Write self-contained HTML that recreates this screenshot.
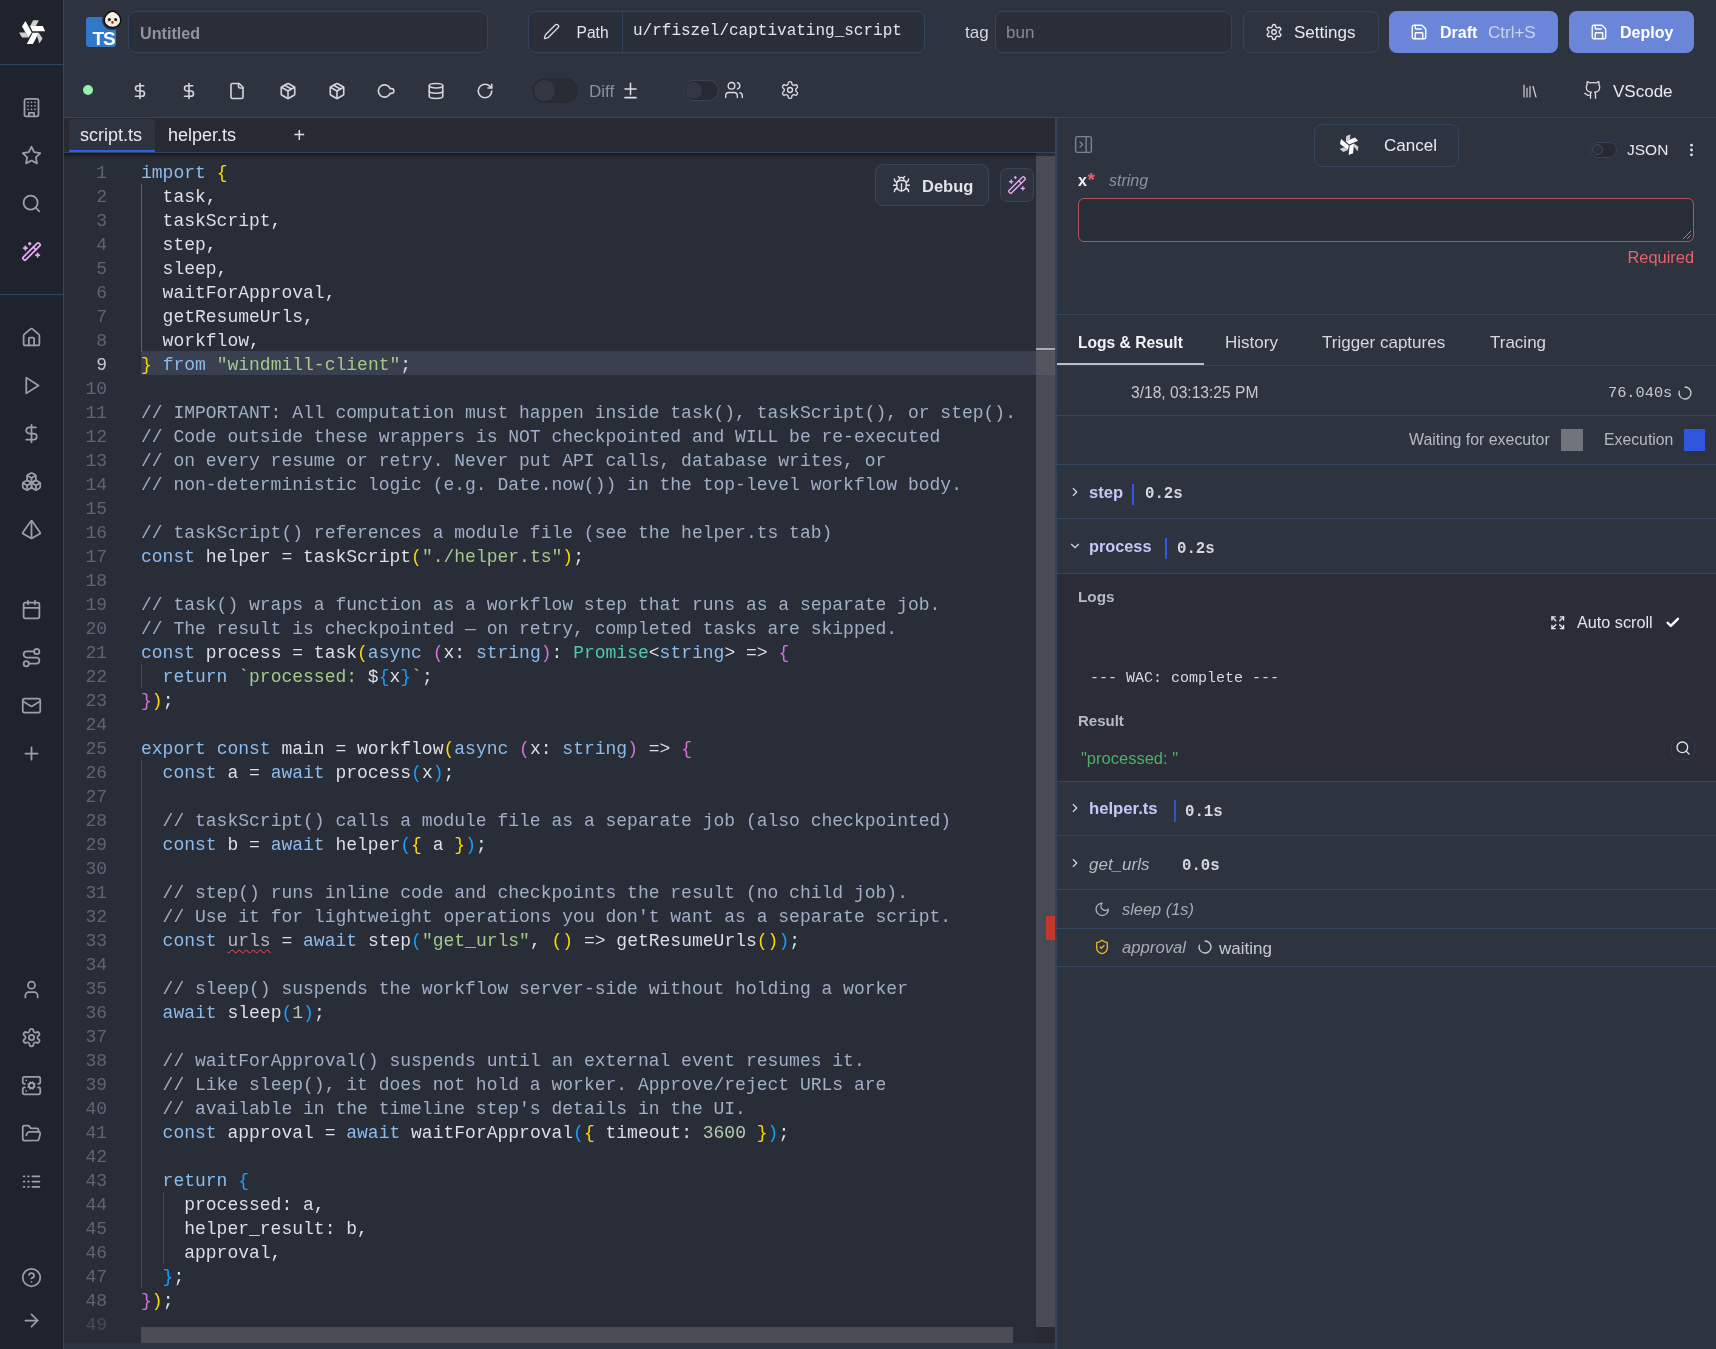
<!DOCTYPE html>
<html><head><meta charset="utf-8"><style>
*{box-sizing:border-box;margin:0;padding:0}
html,body{will-change:transform;width:1716px;height:1349px;overflow:hidden;background:#2e3340;font-family:"Liberation Sans",sans-serif;color:#e2e5ea}
.abs,.ic{position:absolute}
.ic{display:block}
#sidebar{position:absolute;left:0;top:0;width:64px;height:1349px;background:#1f232d;border-right:1px solid #35435a}
.hline{position:absolute;height:1px;background:#35455b}
.vline{position:absolute;width:1px;background:#35455b}
.input{position:absolute;border:1px solid #36445a;border-radius:8px;background:#2a2e39}
.btn{position:absolute;border:1px solid #36445a;border-radius:8px;background:#2e3340}
.t{position:absolute;white-space:pre;line-height:1}
.mono{font-family:"Liberation Mono",monospace}
#editor{position:absolute;left:64px;top:153px;width:991px;height:1190px;background:#292d38;overflow:hidden}
.ln{position:absolute;left:64px;width:43px;text-align:right;font-family:"Liberation Mono",monospace;font-size:18px;line-height:24px;color:#5d6576;height:24px}
.ln.cur{color:#c5c8ce}
.cl{position:absolute;left:141px;font-family:"Liberation Mono",monospace;font-size:18px;line-height:24px;color:#dcdfe4;white-space:pre;height:24px}
.k{color:#8cbcec} .c{color:#a0aec6} .s{color:#a6c98a} .t{} .tp{color:#4ec9b0} .n{color:#b5cea8}
.b1{color:#ffd700} .b2{color:#da70d6} .b3{color:#179fff}
.u{color:#b4b7bd;text-decoration:underline wavy #f14c4c;text-underline-offset:3px;text-decoration-thickness:1px}
#rightx{position:absolute;left:1056px;top:117px;width:660px;height:1232px;background:#2e3340;border-left:1px solid #3a4252}
.row{position:absolute;left:0;width:660px;border-bottom:1px solid #3a4252}
</style></head><body>
<div id="sidebar">
  <svg class="ic" style="left:14px;top:14px;width:36px;height:36px;transform:rotate(0deg);transform-origin:50% 51%" viewBox="0 0 1349 1349"><polygon fill="#ffffff" points="300,470 430,265 665,690 545,885"/><polygon fill="#d0d0d0" points="190,690 430,690 545,885 300,885"/><polygon fill="#ffffff" points="600,450 1080,450 1165,650 690,650"/><polygon fill="#d0d0d0" points="605,450 720,230 930,230 820,450"/><polygon fill="#ffffff" points="480,1120 700,705 930,705 710,1120"/><polygon fill="#d0d0d0" points="860,800 930,705 1070,920 950,1110"/></svg>
  <div class="hline" style="left:0;top:64px;width:63px"></div>
  <div class="hline" style="left:0;top:294px;width:63px"></div>
  <svg class="ic" style="left:21px;top:97px;width:21px;height:21px;" viewBox="0 0 24 24" fill="none" stroke="#9aa0ab" stroke-width="2" stroke-linecap="round" stroke-linejoin="round"><rect width="16" height="20" x="4" y="2" rx="2" ry="2"/><path d="M9 22v-4h6v4"/><path d="M8 6h.01M16 6h.01M12 6h.01M12 10h.01M12 14h.01M16 10h.01M16 14h.01M8 10h.01M8 14h.01"/></svg>
<svg class="ic" style="left:21px;top:145px;width:21px;height:21px;" viewBox="0 0 24 24" fill="none" stroke="#9aa0ab" stroke-width="2" stroke-linecap="round" stroke-linejoin="round"><polygon points="12 2 15.09 8.26 22 9.27 17 14.14 18.18 21.02 12 17.77 5.82 21.02 7 14.14 2 9.27 8.91 8.26 12 2"/></svg>
<svg class="ic" style="left:21px;top:193px;width:21px;height:21px;" viewBox="0 0 24 24" fill="none" stroke="#9aa0ab" stroke-width="2" stroke-linecap="round" stroke-linejoin="round"><circle cx="11" cy="11" r="8"/><path d="m21 21-4.3-4.3"/></svg>
<svg class="ic" style="left:21px;top:241px;width:21px;height:21px;" viewBox="0 0 24 24" fill="none" stroke="#e9a8f5" stroke-width="2" stroke-linecap="round" stroke-linejoin="round"><path d="m21.64 3.64-1.28-1.28a1.21 1.21 0 0 0-1.72 0L2.36 18.64a1.21 1.21 0 0 0 0 1.72l1.28 1.28a1.2 1.2 0 0 0 1.72 0L21.64 5.36a1.2 1.2 0 0 0 0-1.72"/><path d="m14 7 3 3"/><path d="M5 6v4"/><path d="M19 14v4"/><path d="M10 2v2"/><path d="M7 8H3"/><path d="M21 16h-4"/><path d="M11 3H9"/></svg>
<svg class="ic" style="left:21px;top:327px;width:21px;height:21px;" viewBox="0 0 24 24" fill="none" stroke="#9aa0ab" stroke-width="2" stroke-linecap="round" stroke-linejoin="round"><path d="M15 21v-8a1 1 0 0 0-1-1h-4a1 1 0 0 0-1 1v8"/><path d="M3 10a2 2 0 0 1 .709-1.528l7-5.999a2 2 0 0 1 2.582 0l7 5.999A2 2 0 0 1 21 10v9a2 2 0 0 1-2 2H5a2 2 0 0 1-2-2z"/></svg>
<svg class="ic" style="left:21px;top:375px;width:21px;height:21px;" viewBox="0 0 24 24" fill="none" stroke="#9aa0ab" stroke-width="2" stroke-linecap="round" stroke-linejoin="round"><polygon points="6 3 20 12 6 21 6 3"/></svg>
<svg class="ic" style="left:21px;top:423px;width:21px;height:21px;" viewBox="0 0 24 24" fill="none" stroke="#9aa0ab" stroke-width="2" stroke-linecap="round" stroke-linejoin="round"><line x1="12" x2="12" y1="2" y2="22"/><path d="M17 5H9.5a3.5 3.5 0 0 0 0 7h5a3.5 3.5 0 0 1 0 7H6"/></svg>
<svg class="ic" style="left:21px;top:471px;width:21px;height:21px;" viewBox="0 0 24 24" fill="none" stroke="#9aa0ab" stroke-width="2" stroke-linecap="round" stroke-linejoin="round"><path d="M2.97 12.92A2 2 0 0 0 2 14.63v3.24a2 2 0 0 0 .97 1.71l3 1.8a2 2 0 0 0 2.06 0L12 19v-5.5l-5-3-4.03 2.42Z"/><path d="m7 16.5-4.74-2.85"/><path d="m7 16.5 5-3"/><path d="M7 16.5v5.17"/><path d="M12 13.5V19l3.97 2.38a2 2 0 0 0 2.06 0l3-1.8a2 2 0 0 0 .97-1.710v-3.24a2 2 0 0 0-.97-1.71L17 10.5l-5 3Z"/><path d="m17 16.5-5-3"/><path d="m17 16.5 4.74-2.85"/><path d="M17 16.5v5.17"/><path d="M7.97 4.42A2 2 0 0 0 7 6.13v4.37l5 3 5-3V6.13a2 2 0 0 0-.97-1.71l-3-1.8a2 2 0 0 0-2.06 0l-3 1.8Z"/><path d="M12 8 7.26 5.15"/><path d="m12 8 4.74-2.85"/><path d="M12 13.5V8"/></svg>
<svg class="ic" style="left:21px;top:519px;width:21px;height:21px;" viewBox="0 0 24 24" fill="none" stroke="#9aa0ab" stroke-width="2" stroke-linecap="round" stroke-linejoin="round"><path d="M2.5 16.88a1 1 0 0 1-.32-1.43l9-13.02a1 1 0 0 1 1.64 0l9 13.01a1 1 0 0 1-.32 1.44l-8.51 4.86a2 2 0 0 1-1.98 0Z"/><path d="M12 2v20"/></svg>
<svg class="ic" style="left:21px;top:599px;width:21px;height:21px;" viewBox="0 0 24 24" fill="none" stroke="#9aa0ab" stroke-width="2" stroke-linecap="round" stroke-linejoin="round"><path d="M8 2v4"/><path d="M16 2v4"/><rect width="18" height="18" x="3" y="4" rx="2"/><path d="M3 10h18"/></svg>
<svg class="ic" style="left:21px;top:647px;width:21px;height:21px;" viewBox="0 0 24 24" fill="none" stroke="#9aa0ab" stroke-width="2" stroke-linecap="round" stroke-linejoin="round"><circle cx="6" cy="19" r="3"/><path d="M9 19h8.5a3.5 3.5 0 0 0 0-7h-11a3.5 3.5 0 0 1 0-7H15"/><circle cx="18" cy="5" r="3"/></svg>
<svg class="ic" style="left:21px;top:695px;width:21px;height:21px;" viewBox="0 0 24 24" fill="none" stroke="#9aa0ab" stroke-width="2" stroke-linecap="round" stroke-linejoin="round"><rect width="20" height="16" x="2" y="4" rx="2"/><path d="m22 7-8.97 5.7a1.94 1.94 0 0 1-2.06 0L2 7"/></svg>
<svg class="ic" style="left:21px;top:743px;width:21px;height:21px;" viewBox="0 0 24 24" fill="none" stroke="#9aa0ab" stroke-width="2" stroke-linecap="round" stroke-linejoin="round"><path d="M5 12h14"/><path d="M12 5v14"/></svg>
<svg class="ic" style="left:21px;top:979px;width:21px;height:21px;" viewBox="0 0 24 24" fill="none" stroke="#9aa0ab" stroke-width="2" stroke-linecap="round" stroke-linejoin="round"><path d="M19 21v-2a4 4 0 0 0-4-4H9a4 4 0 0 0-4 4v2"/><circle cx="12" cy="7" r="4"/></svg>
<svg class="ic" style="left:21px;top:1027px;width:21px;height:21px;" viewBox="0 0 24 24" fill="none" stroke="#9aa0ab" stroke-width="2" stroke-linecap="round" stroke-linejoin="round"><path d="M12.22 2h-.44a2 2 0 0 0-2 2v.18a2 2 0 0 1-1 1.73l-.43.25a2 2 0 0 1-2 0l-.15-.08a2 2 0 0 0-2.73.73l-.22.38a2 2 0 0 0 .73 2.73l.15.1a2 2 0 0 1 1 1.72v.51a2 2 0 0 1-1 1.74l-.15.09a2 2 0 0 0-.73 2.73l.22.38a2 2 0 0 0 2.73.73l.15-.08a2 2 0 0 1 2 0l.43.25a2 2 0 0 1 1 1.73V20a2 2 0 0 0 2 2h.44a2 2 0 0 0 2-2v-.18a2 2 0 0 1 1-1.73l.43-.25a2 2 0 0 1 2 0l.15.08a2 2 0 0 0 2.73-.73l.22-.39a2 2 0 0 0-.73-2.73l-.15-.08a2 2 0 0 1-1-1.74v-.5a2 2 0 0 1 1-1.74l.15-.09a2 2 0 0 0 .73-2.73l-.22-.38a2 2 0 0 0-2.73-.73l-.15.08a2 2 0 0 1-2 0l-.43-.25a2 2 0 0 1-1-1.73V4a2 2 0 0 0-2-2z"/><circle cx="12" cy="12" r="3"/></svg>
<svg class="ic" style="left:21px;top:1075px;width:21px;height:21px;" viewBox="0 0 24 24" fill="none" stroke="#9aa0ab" stroke-width="2" stroke-linecap="round" stroke-linejoin="round"><circle cx="12" cy="12" r="3"/><path d="M4.5 10H4a2 2 0 0 1-2-2V4a2 2 0 0 1 2-2h16a2 2 0 0 1 2 2v4a2 2 0 0 1-2 2h-.5"/><path d="M4.5 14H4a2 2 0 0 0-2 2v4a2 2 0 0 0 2 2h16a2 2 0 0 0 2-2v-4a2 2 0 0 0-2-2h-.5"/><path d="M6 6h.01"/><path d="M6 18h.01"/><path d="m15.7 13.4-.9-.3"/><path d="m9.2 10.9-.9-.3"/><path d="m10.6 15.7.3-.9"/><path d="m13.6 15.7-.4-1"/><path d="m10.8 9.3-.4-1"/><path d="m8.3 13.6 1-.4"/><path d="m14.7 10.4 1-.4"/><path d="m13.4 8.3-.3.9"/></svg>
<svg class="ic" style="left:21px;top:1123px;width:21px;height:21px;" viewBox="0 0 24 24" fill="none" stroke="#9aa0ab" stroke-width="2" stroke-linecap="round" stroke-linejoin="round"><path d="m6 14 1.5-2.9A2 2 0 0 1 9.24 10H20a2 2 0 0 1 1.94 2.5l-1.54 6a2 2 0 0 1-1.95 1.5H4a2 2 0 0 1-2-2V5a2 2 0 0 1 2-2h3.9a2 2 0 0 1 1.69.9l.81 1.2a2 2 0 0 0 1.67.9H18a2 2 0 0 1 2 2v2"/></svg>
<svg class="ic" style="left:21px;top:1171px;width:21px;height:21px;" viewBox="0 0 24 24" fill="none" stroke="#9aa0ab" stroke-width="2" stroke-linecap="round" stroke-linejoin="round"><path d="M13 12h8"/><path d="M13 18h8"/><path d="M13 6h8"/><path d="M3 12h1"/><path d="M3 18h1"/><path d="M3 6h1"/><path d="M8 12h1"/><path d="M8 18h1"/><path d="M8 6h1"/></svg>
<svg class="ic" style="left:21px;top:1267px;width:21px;height:21px;" viewBox="0 0 24 24" fill="none" stroke="#9aa0ab" stroke-width="2" stroke-linecap="round" stroke-linejoin="round"><circle cx="12" cy="12" r="10"/><path d="M9.09 9a3 3 0 0 1 5.83 1c0 2-3 3-3 3"/><path d="M12 17h.01"/></svg>
<svg class="ic" style="left:21px;top:1310px;width:21px;height:21px;" viewBox="0 0 24 24" fill="none" stroke="#9aa0ab" stroke-width="2" stroke-linecap="round" stroke-linejoin="round"><path d="M5 12h14"/><path d="m12 5 7 7-7 7"/></svg>
</div>

<!-- header row 1 -->
<div class="abs" style="left:86px;top:17px;width:30px;height:30px;background:#3178c6;border-radius:3px"></div>
<div class="t" style="left:92.5px;top:28.5px;font-size:19px;font-weight:bold;color:#fff;letter-spacing:-1.2px">TS</div>
<svg class="ic" style="left:100px;top:8px;width:26px;height:24px" viewBox="0 0 26 24">
<path d="M12.5 3C15 3.3 19.5 6 20.6 10.5C21.5 15 18.2 19.5 12.5 19.5C6.8 19.5 3.5 15 4.4 10.5C5.5 6 10 3.3 12.5 3Z" fill="#2e3340" stroke="#2e3340" stroke-width="4.5"/>
<path d="M12.5 3C15 3.3 19.5 6 20.6 10.5C21.5 15 18.2 19.5 12.5 19.5C6.8 19.5 3.5 15 4.4 10.5C5.5 6 10 3.3 12.5 3Z" fill="#f7efdf" stroke="#0d0d0d" stroke-width="1.4"/>
<ellipse cx="8.2" cy="13.4" rx="1.3" ry="0.8" fill="#f3b9cc"/><ellipse cx="16.8" cy="13.4" rx="1.3" ry="0.8" fill="#f3b9cc"/>
<circle cx="9.4" cy="11.4" r="1.5" fill="#1b1b1b"/><circle cx="15.6" cy="11.4" r="1.5" fill="#1b1b1b"/>
<circle cx="12.5" cy="14.4" r="1.3" fill="#b8232b"/>
</svg>
<div class="input" style="left:128px;top:11px;width:360px;height:42px"></div>
<div class="t" style="left:140px;top:24.5px;font-size:16.2px;font-weight:bold;color:#8f95a0">Untitled</div>

<div class="input" style="left:528px;top:11px;width:397px;height:42px;background:#2a2e39"></div>
<div class="vline" style="left:622px;top:12px;height:40px;background:#36445a"></div>
<svg class="ic" style="left:543px;top:23px;width:17px;height:17px;" viewBox="0 0 24 24" fill="none" stroke="#d9dde3" stroke-width="1.8" stroke-linecap="round" stroke-linejoin="round"><path d="M21.174 6.812a1 1 0 0 0-3.986-3.987L3.842 16.174a2 2 0 0 0-.5.83l-1.321 4.352a.5.5 0 0 0 .623.622l4.353-1.32a2 2 0 0 0 .83-.497z"/></svg>
<div class="t" style="left:576.5px;top:25px;font-size:15.6px;color:#e2e5ea">Path</div>
<div class="t mono" style="left:633px;top:23px;font-size:16px;color:#e2e5ea">u/rfiszel/captivating_script</div>

<div class="t" style="left:965px;top:24px;font-size:17px;color:#d5d8de">tag</div>
<div class="input" style="left:995px;top:11px;width:237px;height:42px"></div>
<div class="t" style="left:1006px;top:24px;font-size:17px;color:#858b95">bun</div>

<div class="btn" style="left:1243px;top:11px;width:136px;height:42px"></div>
<svg class="ic" style="left:1265px;top:23px;width:18px;height:18px;" viewBox="0 0 24 24" fill="none" stroke="#e2e5ea" stroke-width="1.8" stroke-linecap="round" stroke-linejoin="round"><path d="M12.22 2h-.44a2 2 0 0 0-2 2v.18a2 2 0 0 1-1 1.73l-.43.25a2 2 0 0 1-2 0l-.15-.08a2 2 0 0 0-2.73.73l-.22.38a2 2 0 0 0 .73 2.73l.15.1a2 2 0 0 1 1 1.72v.51a2 2 0 0 1-1 1.74l-.15.09a2 2 0 0 0-.73 2.73l.22.38a2 2 0 0 0 2.73.73l.15-.08a2 2 0 0 1 2 0l.43.25a2 2 0 0 1 1 1.73V20a2 2 0 0 0 2 2h.44a2 2 0 0 0 2-2v-.18a2 2 0 0 1 1-1.73l.43-.25a2 2 0 0 1 2 0l.15.08a2 2 0 0 0 2.73-.73l.22-.39a2 2 0 0 0-.73-2.73l-.15-.08a2 2 0 0 1-1-1.74v-.5a2 2 0 0 1 1-1.74l.15-.09a2 2 0 0 0 .73-2.73l-.22-.38a2 2 0 0 0-2.73-.73l-.15.08a2 2 0 0 1-2 0l-.43-.25a2 2 0 0 1-1-1.73V4a2 2 0 0 0-2-2z"/><circle cx="12" cy="12" r="3"/></svg>
<div class="t" style="left:1294px;top:24px;font-size:17px;color:#e8eaee">Settings</div>

<div class="abs" style="left:1389px;top:11px;width:169px;height:42px;background:#6b86d9;border-radius:8px"></div>
<svg class="ic" style="left:1410px;top:23px;width:18px;height:18px;" viewBox="0 0 24 24" fill="none" stroke="#ffffff" stroke-width="1.8" stroke-linecap="round" stroke-linejoin="round"><path d="M15.2 3a2 2 0 0 1 1.4.6l3.8 3.8a2 2 0 0 1 .6 1.4V19a2 2 0 0 1-2 2H5a2 2 0 0 1-2-2V5a2 2 0 0 1 2-2z"/><path d="M17 21v-7a1 1 0 0 0-1-1H8a1 1 0 0 0-1 1v7"/><path d="M7 3v4a1 1 0 0 0 1 1h7"/></svg>
<div class="t" style="left:1440px;top:25px;font-size:16px;font-weight:bold;color:#fff">Draft</div>
<div class="t" style="left:1488px;top:24px;font-size:17px;color:#c9d3f3">Ctrl+S</div>

<div class="abs" style="left:1569px;top:11px;width:125px;height:42px;background:#6b86d9;border-radius:8px"></div>
<svg class="ic" style="left:1590px;top:23px;width:18px;height:18px;" viewBox="0 0 24 24" fill="none" stroke="#ffffff" stroke-width="1.8" stroke-linecap="round" stroke-linejoin="round"><path d="M15.2 3a2 2 0 0 1 1.4.6l3.8 3.8a2 2 0 0 1 .6 1.4V19a2 2 0 0 1-2 2H5a2 2 0 0 1-2-2V5a2 2 0 0 1 2-2z"/><path d="M17 21v-7a1 1 0 0 0-1-1H8a1 1 0 0 0-1 1v7"/><path d="M7 3v4a1 1 0 0 0 1 1h7"/></svg>
<div class="t" style="left:1620px;top:25px;font-size:16px;font-weight:bold;color:#fff">Deploy</div>

<!-- header row 2 -->
<div class="abs" style="left:83px;top:85px;width:10px;height:10px;border-radius:50%;background:#94f0b1"></div>
<svg class="ic" style="left:130.5px;top:81.5px;width:18px;height:18px;" viewBox="0 0 24 24" fill="none" stroke="#d2d5da" stroke-width="2.15" stroke-linecap="round" stroke-linejoin="round"><line x1="12" x2="12" y1="2" y2="22"/><path d="M17 5H9.5a3.5 3.5 0 0 0 0 7h5a3.5 3.5 0 0 1 0 7H6"/></svg>
<svg class="ic" style="left:179.7px;top:81.5px;width:18px;height:18px;" viewBox="0 0 24 24" fill="none" stroke="#d2d5da" stroke-width="2.15" stroke-linecap="round" stroke-linejoin="round"><line x1="12" x2="12" y1="2" y2="22"/><path d="M17 5H9.5a3.5 3.5 0 0 0 0 7h5a3.5 3.5 0 0 1 0 7H6"/></svg>
<svg class="ic" style="left:228.3px;top:81.5px;width:18px;height:18px;" viewBox="0 0 24 24" fill="none" stroke="#d2d5da" stroke-width="2.15" stroke-linecap="round" stroke-linejoin="round"><path d="M15 2H6a2 2 0 0 0-2 2v16a2 2 0 0 0 2 2h12a2 2 0 0 0 2-2V7Z"/><path d="M14 2v4a2 2 0 0 0 2 2h4"/></svg>
<svg class="ic" style="left:278.5px;top:81.5px;width:18px;height:18px;" viewBox="0 0 24 24" fill="none" stroke="#d2d5da" stroke-width="2.15" stroke-linecap="round" stroke-linejoin="round"><path d="m7.5 4.27 9 5.15"/><path d="M21 8a2 2 0 0 0-1-1.73l-7-4a2 2 0 0 0-2 0l-7 4A2 2 0 0 0 3 8v8a2 2 0 0 0 1 1.73l7 4a2 2 0 0 0 2 0l7-4A2 2 0 0 0 21 16Z"/><path d="m3.3 7 8.7 5 8.7-5"/><path d="M12 22V12"/></svg>
<svg class="ic" style="left:327.5px;top:81.5px;width:18px;height:18px;" viewBox="0 0 24 24" fill="none" stroke="#d2d5da" stroke-width="2.15" stroke-linecap="round" stroke-linejoin="round"><path d="m7.5 4.27 9 5.15"/><path d="M21 8a2 2 0 0 0-1-1.73l-7-4a2 2 0 0 0-2 0l-7 4A2 2 0 0 0 3 8v8a2 2 0 0 0 1 1.73l7 4a2 2 0 0 0 2 0l7-4A2 2 0 0 0 21 16Z"/><path d="m3.3 7 8.7 5 8.7-5"/><path d="M12 22V12"/></svg>
<svg class="ic" style="left:376.5px;top:81.5px;width:18px;height:18px;" viewBox="0 0 24 24" fill="none" stroke="#d2d5da" stroke-width="2.15" stroke-linecap="round" stroke-linejoin="round"><path d="M17.6 8.9A8.2 8.2 0 1 0 17.6 15.1L19.4 15.1A3.1 3.1 0 0 0 19.4 8.9Z"/></svg>
<svg class="ic" style="left:426.6px;top:81.5px;width:18px;height:18px;" viewBox="0 0 24 24" fill="none" stroke="#d2d5da" stroke-width="2.15" stroke-linecap="round" stroke-linejoin="round"><ellipse cx="12" cy="5" rx="9" ry="3"/><path d="M3 5V19A9 3 0 0 0 21 19V5"/><path d="M3 12A9 3 0 0 0 21 12"/></svg>
<svg class="ic" style="left:475.7px;top:81.5px;width:18px;height:18px;" viewBox="0 0 24 24" fill="none" stroke="#d2d5da" stroke-width="2.15" stroke-linecap="round" stroke-linejoin="round"><path d="M21 12a9 9 0 1 1-9-9c2.52 0 4.93 1 6.74 2.74L21 8"/><path d="M21 3v5h-5"/></svg>
<div class="abs" style="left:532px;top:78px;width:46px;height:25px;border-radius:13px;background:#282c35;border:1px solid #262a33"></div>
<div class="abs" style="left:534px;top:80px;width:21px;height:21px;border-radius:50%;background:#333844"></div>
<div class="t" style="left:589px;top:83px;font-size:17px;color:#8a909b">Diff</div>
<svg class="ic" style="left:621px;top:81px;width:19px;height:19px;" viewBox="0 0 24 24" fill="none" stroke="#d9dde3" stroke-width="2" stroke-linecap="round" stroke-linejoin="round"><path d="M12 3v14"/><path d="M5 10h14"/><path d="M5 21h14"/></svg>
<div class="abs" style="left:683px;top:80px;width:36px;height:21px;border-radius:11px;background:#262a33;border:1px solid #3b4455"></div>
<div class="abs" style="left:685px;top:82px;width:17px;height:17px;border-radius:50%;background:#323743"></div>
<svg class="ic" style="left:724px;top:80px;width:20px;height:20px;" viewBox="0 0 24 24" fill="none" stroke="#d9dde3" stroke-width="1.6" stroke-linecap="round" stroke-linejoin="round"><path d="M16 21v-2a4 4 0 0 0-4-4H6a4 4 0 0 0-4 4v2"/><circle cx="9" cy="7" r="4"/><path d="M22 21v-2a4 4 0 0 0-3-3.87"/><path d="M16 3.13a4 4 0 0 1 0 7.75"/></svg>
<svg class="ic" style="left:780px;top:80px;width:20px;height:20px;" viewBox="0 0 24 24" fill="none" stroke="#d9dde3" stroke-width="1.6" stroke-linecap="round" stroke-linejoin="round"><path d="M12.22 2h-.44a2 2 0 0 0-2 2v.18a2 2 0 0 1-1 1.73l-.43.25a2 2 0 0 1-2 0l-.15-.08a2 2 0 0 0-2.73.73l-.22.38a2 2 0 0 0 .73 2.73l.15.1a2 2 0 0 1 1 1.72v.51a2 2 0 0 1-1 1.74l-.15.09a2 2 0 0 0-.73 2.73l.22.38a2 2 0 0 0 2.73.73l.15-.08a2 2 0 0 1 2 0l.43.25a2 2 0 0 1 1 1.73V20a2 2 0 0 0 2 2h.44a2 2 0 0 0 2-2v-.18a2 2 0 0 1 1-1.73l.43-.25a2 2 0 0 1 2 0l.15.08a2 2 0 0 0 2.73-.73l.22-.39a2 2 0 0 0-.73-2.73l-.15-.08a2 2 0 0 1-1-1.74v-.5a2 2 0 0 1 1-1.74l.15-.09a2 2 0 0 0 .73-2.73l-.22-.38a2 2 0 0 0-2.73-.73l-.15.08a2 2 0 0 1-2 0l-.43-.25a2 2 0 0 1-1-1.73V4a2 2 0 0 0-2-2z"/><circle cx="12" cy="12" r="3"/></svg>
<svg class="ic" style="left:1520.5px;top:82px;width:18px;height:18px;" viewBox="0 0 24 24" fill="none" stroke="#d9dde3" stroke-width="1.5" stroke-linecap="round" stroke-linejoin="round"><path d="m16 6 4 14"/><path d="M12 6v14"/><path d="M8 8v12"/><path d="M4 4v16"/></svg>
<svg class="ic" style="left:1583px;top:80px;width:20px;height:20px;" viewBox="0 0 24 24" fill="none" stroke="#d9dde3" stroke-width="1.6" stroke-linecap="round" stroke-linejoin="round"><path d="M15 22v-4a4.8 4.8 0 0 0-1-3.5c3 0 6-2 6-5.5.08-1.25-.27-2.48-1-3.5.28-1.15.28-2.35 0-3.5 0 0-1 0-3 1.5-2.64-.5-5.36-.5-8 0C6 2 5 2 5 2c-.3 1.15-.3 2.35 0 3.5A5.403 5.403 0 0 0 4 9c0 3.5 3 5.5 6 5.5-.39.49-.68 1.05-.85 1.65-.17.6-.22 1.23-.15 1.850v4"/><path d="M9 18c-4.51 2-5-2-7-2"/></svg>
<div class="t" style="left:1613px;top:83px;font-size:17px;color:#e8eaee">VScode</div>
<div class="hline" style="left:64px;top:117px;width:1652px"></div>

<!-- tabs -->
<div class="abs" style="left:64px;top:118px;width:992px;height:35px;background:#272a33"></div>
<div class="abs" style="left:69px;top:119px;width:86px;height:34px;background:#2e3340;border-radius:4px 4px 0 0"></div>
<div class="abs" style="left:69px;top:150px;width:86px;height:3px;background:#2d5cf0"></div>
<div class="t" style="left:80px;top:126px;font-size:18px;color:#e8eaee">script.ts</div>
<div class="t" style="left:168px;top:126px;font-size:18px;color:#e8eaee">helper.ts</div>
<div class="t" style="left:293.5px;top:125px;font-size:20px;color:#d9dde3">+</div>
<div class="hline" style="left:64px;top:152px;width:992px"></div>

<!-- editor -->
<div id="editor">
  <div class="abs" style="left:77px;top:198px;width:895px;height:24px;background:#3a4050"></div>
  <div class="abs" style="left:0;top:0;width:972px;height:8px;box-shadow:inset 0 6px 6px -6px #000"></div>
  <div class="abs" style="left:77px;top:31px;width:1px;height:168px;background:#5a6070"></div>
  <div class="abs" style="left:77px;top:511px;width:1px;height:24px;background:#434857"></div>
  <div class="abs" style="left:77px;top:607px;width:1px;height:528px;background:#434857"></div>
  <div class="abs" style="left:99px;top:1039px;width:1px;height:72px;background:#434857"></div>
  <div style="position:absolute;left:-64px;top:-153px">
  <div class="ln" style="top:161px;">1</div><div class="cl" style="top:161px"><span class="k">import</span> <span class="b1">{</span></div>
<div class="ln" style="top:185px;">2</div><div class="cl" style="top:185px">  task,</div>
<div class="ln" style="top:209px;">3</div><div class="cl" style="top:209px">  taskScript,</div>
<div class="ln" style="top:233px;">4</div><div class="cl" style="top:233px">  step,</div>
<div class="ln" style="top:257px;">5</div><div class="cl" style="top:257px">  sleep,</div>
<div class="ln" style="top:281px;">6</div><div class="cl" style="top:281px">  waitForApproval,</div>
<div class="ln" style="top:305px;">7</div><div class="cl" style="top:305px">  getResumeUrls,</div>
<div class="ln" style="top:329px;">8</div><div class="cl" style="top:329px">  workflow,</div>
<div class="ln cur" style="top:353px;">9</div><div class="cl" style="top:353px"><span class="b1">}</span> <span class="k">from</span> <span class="s">&quot;windmill-client&quot;</span>;</div>
<div class="ln" style="top:377px;">10</div><div class="cl" style="top:377px"></div>
<div class="ln" style="top:401px;">11</div><div class="cl" style="top:401px"><span class="c">// IMPORTANT: All computation must happen inside task(), taskScript(), or step().</span></div>
<div class="ln" style="top:425px;">12</div><div class="cl" style="top:425px"><span class="c">// Code outside these wrappers is NOT checkpointed and WILL be re-executed</span></div>
<div class="ln" style="top:449px;">13</div><div class="cl" style="top:449px"><span class="c">// on every resume or retry. Never put API calls, database writes, or</span></div>
<div class="ln" style="top:473px;">14</div><div class="cl" style="top:473px"><span class="c">// non-deterministic logic (e.g. Date.now()) in the top-level workflow body.</span></div>
<div class="ln" style="top:497px;">15</div><div class="cl" style="top:497px"></div>
<div class="ln" style="top:521px;">16</div><div class="cl" style="top:521px"><span class="c">// taskScript() references a module file (see the helper.ts tab)</span></div>
<div class="ln" style="top:545px;">17</div><div class="cl" style="top:545px"><span class="k">const</span> helper = taskScript<span class="b1">(</span><span class="s">&quot;./helper.ts&quot;</span><span class="b1">)</span>;</div>
<div class="ln" style="top:569px;">18</div><div class="cl" style="top:569px"></div>
<div class="ln" style="top:593px;">19</div><div class="cl" style="top:593px"><span class="c">// task() wraps a function as a workflow step that runs as a separate job.</span></div>
<div class="ln" style="top:617px;">20</div><div class="cl" style="top:617px"><span class="c">// The result is checkpointed — on retry, completed tasks are skipped.</span></div>
<div class="ln" style="top:641px;">21</div><div class="cl" style="top:641px"><span class="k">const</span> process = task<span class="b1">(</span><span class="k">async</span> <span class="b2">(</span>x: <span class="k">string</span><span class="b2">)</span>: <span class="tp">Promise</span>&lt;<span class="k">string</span>&gt; =&gt; <span class="b2">{</span></div>
<div class="ln" style="top:665px;">22</div><div class="cl" style="top:665px">  <span class="k">return</span> <span class="s">`processed: </span>$<span class="b3">{</span>x<span class="b3">}</span><span class="s">`</span>;</div>
<div class="ln" style="top:689px;">23</div><div class="cl" style="top:689px"><span class="b2">}</span><span class="b1">)</span>;</div>
<div class="ln" style="top:713px;">24</div><div class="cl" style="top:713px"></div>
<div class="ln" style="top:737px;">25</div><div class="cl" style="top:737px"><span class="k">export</span> <span class="k">const</span> main = workflow<span class="b1">(</span><span class="k">async</span> <span class="b2">(</span>x: <span class="k">string</span><span class="b2">)</span> =&gt; <span class="b2">{</span></div>
<div class="ln" style="top:761px;">26</div><div class="cl" style="top:761px">  <span class="k">const</span> a = <span class="k">await</span> process<span class="b3">(</span>x<span class="b3">)</span>;</div>
<div class="ln" style="top:785px;">27</div><div class="cl" style="top:785px"></div>
<div class="ln" style="top:809px;">28</div><div class="cl" style="top:809px">  <span class="c">// taskScript() calls a module file as a separate job (also checkpointed)</span></div>
<div class="ln" style="top:833px;">29</div><div class="cl" style="top:833px">  <span class="k">const</span> b = <span class="k">await</span> helper<span class="b3">(</span><span class="b1">{</span> a <span class="b1">}</span><span class="b3">)</span>;</div>
<div class="ln" style="top:857px;">30</div><div class="cl" style="top:857px"></div>
<div class="ln" style="top:881px;">31</div><div class="cl" style="top:881px">  <span class="c">// step() runs inline code and checkpoints the result (no child job).</span></div>
<div class="ln" style="top:905px;">32</div><div class="cl" style="top:905px">  <span class="c">// Use it for lightweight operations you don&#x27;t want as a separate script.</span></div>
<div class="ln" style="top:929px;">33</div><div class="cl" style="top:929px">  <span class="k">const</span> <span class="u">urls</span> = <span class="k">await</span> step<span class="b3">(</span><span class="s">&quot;get_urls&quot;</span>, <span class="b1">()</span> =&gt; getResumeUrls<span class="b1">()</span><span class="b3">)</span>;</div>
<div class="ln" style="top:953px;">34</div><div class="cl" style="top:953px"></div>
<div class="ln" style="top:977px;">35</div><div class="cl" style="top:977px">  <span class="c">// sleep() suspends the workflow server-side without holding a worker</span></div>
<div class="ln" style="top:1001px;">36</div><div class="cl" style="top:1001px">  <span class="k">await</span> sleep<span class="b3">(</span><span class="n">1</span><span class="b3">)</span>;</div>
<div class="ln" style="top:1025px;">37</div><div class="cl" style="top:1025px"></div>
<div class="ln" style="top:1049px;">38</div><div class="cl" style="top:1049px">  <span class="c">// waitForApproval() suspends until an external event resumes it.</span></div>
<div class="ln" style="top:1073px;">39</div><div class="cl" style="top:1073px">  <span class="c">// Like sleep(), it does not hold a worker. Approve/reject URLs are</span></div>
<div class="ln" style="top:1097px;">40</div><div class="cl" style="top:1097px">  <span class="c">// available in the timeline step&#x27;s details in the UI.</span></div>
<div class="ln" style="top:1121px;">41</div><div class="cl" style="top:1121px">  <span class="k">const</span> approval = <span class="k">await</span> waitForApproval<span class="b3">(</span><span class="b1">{</span> timeout: <span class="n">3600</span> <span class="b1">}</span><span class="b3">)</span>;</div>
<div class="ln" style="top:1145px;">42</div><div class="cl" style="top:1145px"></div>
<div class="ln" style="top:1169px;">43</div><div class="cl" style="top:1169px">  <span class="k">return</span> <span class="b3">{</span></div>
<div class="ln" style="top:1193px;">44</div><div class="cl" style="top:1193px">    processed: a,</div>
<div class="ln" style="top:1217px;">45</div><div class="cl" style="top:1217px">    helper_result: b,</div>
<div class="ln" style="top:1241px;">46</div><div class="cl" style="top:1241px">    approval,</div>
<div class="ln" style="top:1265px;">47</div><div class="cl" style="top:1265px">  <span class="b3">}</span>;</div>
<div class="ln" style="top:1289px;">48</div><div class="cl" style="top:1289px"><span class="b2">}</span><span class="b1">)</span>;</div>
<div class="ln" style="top:1313px;color:#454b59">49</div><div class="cl" style="top:1313px"></div>
  </div>
  <div class="abs" style="left:811px;top:11px;width:114px;height:42px;border:1px solid #3b4657;border-radius:8px;background:#2e3340"></div>
  <svg class="ic" style="left:828px;top:22px;width:19px;height:19px;" viewBox="0 0 24 24" fill="none" stroke="#e2e5ea" stroke-width="1.7" stroke-linecap="round" stroke-linejoin="round"><path d="m8 2 1.88 1.88"/><path d="M14.12 3.88 16 2"/><path d="M9 7.13v-1a3.003 3.003 0 1 1 6 0v1"/><path d="M12 20c-3.3 0-6-2.7-6-6v-3a4 4 0 0 1 4-4h4a4 4 0 0 1 4 4v3c0 3.3-2.7 6-6 6"/><path d="M12 20v-9"/><path d="M6.53 9C4.6 8.8 3 7.1 3 5"/><path d="M6 13H2"/><path d="M3 21c0-2.1 1.7-3.9 3.8-4"/><path d="M20.97 5c0 2.1-1.6 3.8-3.5 4"/><path d="M22 13h-4"/><path d="M17.2 17c2.1.1 3.8 1.9 3.8 4"/></svg>
  <div class="t" style="left:858px;top:25px;font-size:16.5px;font-weight:bold;color:#e2e5ea">Debug</div>
  <div class="abs" style="left:936px;top:15px;width:34px;height:34px;border:1px solid #3b4455;border-radius:7px;background:#2e3340"></div>
  <svg class="ic" style="left:943px;top:22px;width:20px;height:20px;" viewBox="0 0 24 24" fill="none" stroke="#e9a8f5" stroke-width="1.6" stroke-linecap="round" stroke-linejoin="round"><path d="m21.64 3.64-1.28-1.28a1.21 1.21 0 0 0-1.72 0L2.36 18.64a1.21 1.21 0 0 0 0 1.72l1.28 1.28a1.2 1.2 0 0 0 1.72 0L21.64 5.36a1.2 1.2 0 0 0 0-1.72"/><path d="m14 7 3 3"/><path d="M5 6v4"/><path d="M19 14v4"/><path d="M10 2v2"/><path d="M7 8H3"/><path d="M21 16h-4"/><path d="M11 3H9"/></svg>
  <div class="abs" style="left:972px;top:3px;width:19px;height:1171px;background:#484b55"></div><div class="abs" style="left:972px;top:1174px;width:19px;height:16px;background:#272a33"></div>
  <div class="abs" style="left:972px;top:198px;width:19px;height:24px;background:#53565f"></div><div class="abs" style="left:972px;top:195px;width:19px;height:2px;background:#a9acb2"></div>
  <div class="abs" style="left:982px;top:763px;width:9px;height:24px;background:#c0392b"></div>
  <div class="abs" style="left:77px;top:1174px;width:872px;height:16px;background:#4a4d55"></div>
</div>

<!-- right panel -->
<div class="abs" style="left:1055px;top:117px;width:2px;height:1232px;background:#34445a;border-radius:0px;"></div>
<svg class="ic" style="left:1073px;top:134px;width:21px;height:21px;" viewBox="0 0 24 24" fill="none" stroke="#7d8491" stroke-width="1.6" stroke-linecap="round" stroke-linejoin="round"><rect width="18" height="18" x="3" y="3" rx="2"/><path d="M15 3v18"/><path d="m8 9 3 3-3 3"/></svg>
<div class="abs" style="left:1314px;top:124px;width:145px;height:43px;background:#2e3340;border:1px solid #35455b;border-radius:8px;"></div>
<svg class="ic" style="left:1335.3px;top:130.8px;width:28px;height:28px;transform:rotate(-22deg);transform-origin:50% 51%" viewBox="0 0 1349 1349"><polygon fill="#ffffff" points="300,470 430,265 665,690 545,885"/><polygon fill="#d0d0d0" points="190,690 430,690 545,885 300,885"/><polygon fill="#ffffff" points="600,450 1080,450 1165,650 690,650"/><polygon fill="#d0d0d0" points="605,450 720,230 930,230 820,450"/><polygon fill="#ffffff" points="480,1120 700,705 930,705 710,1120"/><polygon fill="#d0d0d0" points="860,800 930,705 1070,920 950,1110"/></svg>
<div class="t" style="left:1384px;top:137.2px;font-size:17px;color:#e8eaee;font-weight:400;font-style:normal;font-family:'Liberation Sans',sans-serif;">Cancel</div>
<div class="abs" style="left:1590px;top:142px;width:27px;height:16px;background:#262a34;border:1px solid #34455b;border-radius:8px;"></div>
<div class="abs" style="left:1592px;top:144px;width:11px;height:11px;background:#2b303b;border:1px solid #3b4e66;border-radius:6px;"></div>
<div class="t" style="left:1627px;top:142.0px;font-size:15.5px;color:#e8eaee;font-weight:400;font-style:normal;font-family:'Liberation Sans',sans-serif;">JSON</div>
<svg class="ic" style="left:1688px;top:141px;width:7px;height:18px" viewBox="0 0 7 18"><circle cx="3.5" cy="4.2" r="1.4" fill="#e2e5ea"/><circle cx="3.5" cy="9" r="1.4" fill="#e2e5ea"/><circle cx="3.5" cy="13.8" r="1.4" fill="#e2e5ea"/></svg>
<div class="t" style="left:1078px;top:172.9px;font-size:16px;color:#f2f3f5;font-weight:700;font-style:normal;font-family:'Liberation Sans',sans-serif;">x</div>
<div class="t" style="left:1087.5px;top:170.1px;font-size:19px;color:#e5646a;font-weight:700;font-style:normal;font-family:'Liberation Sans',sans-serif;">*</div>
<div class="t" style="left:1109px;top:172.9px;font-size:16px;color:#8d939e;font-weight:400;font-style:italic;font-family:'Liberation Sans',sans-serif;">string</div>
<div class="abs" style="left:1078px;top:198px;width:616px;height:44px;background:#292d38;border:1px solid #b9525a;border-radius:6px;"></div>
<svg class="ic" style="left:1682px;top:230px;width:10px;height:10px" viewBox="0 0 10 10"><path d="M9 1L1 9M9 5L5 9" stroke="#8a8f99" stroke-width="1"/></svg>
<div class="t" style="right:22px;top:248.5px;font-size:16.4px;color:#e5646a;font-weight:400;font-style:normal;font-family:'Liberation Sans',sans-serif;">Required</div>
<div class="abs" style="left:1057px;top:314px;width:659px;height:1px;background:#35455b;border-radius:0px;"></div>
<div class="t" style="left:1078px;top:334.9px;font-size:15.6px;color:#f2f3f5;font-weight:700;font-style:normal;font-family:'Liberation Sans',sans-serif;">Logs &amp; Result</div>
<div class="t" style="left:1225px;top:334.2px;font-size:17px;color:#d5d8de;font-weight:400;font-style:normal;font-family:'Liberation Sans',sans-serif;">History</div>
<div class="t" style="left:1322px;top:334.2px;font-size:17px;color:#d5d8de;font-weight:400;font-style:normal;font-family:'Liberation Sans',sans-serif;">Trigger captures</div>
<div class="t" style="left:1490px;top:334.2px;font-size:17px;color:#d5d8de;font-weight:400;font-style:normal;font-family:'Liberation Sans',sans-serif;">Tracing</div>
<div class="abs" style="left:1057px;top:365px;width:659px;height:1px;background:#35455b;border-radius:0px;"></div>
<div class="abs" style="left:1057px;top:363px;width:147px;height:2px;background:#b8bfcc;border-radius:0px;"></div>
<div class="t" style="left:1131px;top:384.9px;font-size:15.6px;color:#c5c9d0;font-weight:400;font-style:normal;font-family:'Liberation Sans',sans-serif;">3/18, 03:13:25 PM</div>
<div class="t" style="left:1608px;top:385.9px;font-size:15.3px;color:#c5c9d0;font-weight:400;font-style:normal;font-family:'Liberation Mono',monospace;">76.040s</div>
<svg class="ic" style="left:1677px;top:385px;width:16px;height:16px;transform:rotate(-90deg)" viewBox="0 0 24 24" fill="none" stroke="#c5c9d0" stroke-width="2" stroke-linecap="round" stroke-linejoin="round"><path d="M21 12a9 9 0 1 1-6.219-8.56"/></svg>
<div class="abs" style="left:1057px;top:415px;width:659px;height:1px;background:#35455b;border-radius:0px;"></div>
<div class="t" style="left:1409px;top:431.8px;font-size:15.9px;color:#b5bac3;font-weight:400;font-style:normal;font-family:'Liberation Sans',sans-serif;">Waiting for executor</div>
<div class="abs" style="left:1561px;top:429px;width:22px;height:22px;background:#70747d;border-radius:0px;"></div>
<div class="t" style="left:1604px;top:431.8px;font-size:15.8px;color:#b5bac3;font-weight:400;font-style:normal;font-family:'Liberation Sans',sans-serif;">Execution</div>
<div class="abs" style="left:1684px;top:429px;width:21px;height:22px;background:#2f56dc;border-radius:0px;"></div>
<div class="abs" style="left:1057px;top:464px;width:659px;height:1px;background:#35455b;border-radius:0px;"></div>
<svg class="ic" style="left:1068px;top:485px;width:14px;height:14px;" viewBox="0 0 24 24" fill="none" stroke="#d5d8de" stroke-width="2" stroke-linecap="round" stroke-linejoin="round"><path d="m9 18 6-6-6-6"/></svg>
<div class="t" style="left:1089px;top:485.4px;font-size:16.6px;color:#c5c8f8;font-weight:700;font-style:normal;font-family:'Liberation Sans',sans-serif;">step</div>
<div class="abs" style="left:1132px;top:484px;width:2px;height:21px;background:#3158e0;border-radius:0px;"></div>
<div class="t" style="left:1145px;top:486.7px;font-size:15.7px;color:#d5d8de;font-weight:700;font-style:normal;font-family:'Liberation Mono',monospace;">0.2s</div>
<div class="abs" style="left:1057px;top:518px;width:659px;height:1px;background:#35455b;border-radius:0px;"></div>
<svg class="ic" style="left:1068px;top:539px;width:14px;height:14px;" viewBox="0 0 24 24" fill="none" stroke="#d5d8de" stroke-width="2" stroke-linecap="round" stroke-linejoin="round"><path d="m6 9 6 6 6-6"/></svg>
<div class="t" style="left:1089px;top:537.8px;font-size:16.3px;color:#c5c8f8;font-weight:700;font-style:normal;font-family:'Liberation Sans',sans-serif;">process</div>
<div class="abs" style="left:1165px;top:538px;width:2px;height:21px;background:#3158e0;border-radius:0px;"></div>
<div class="t" style="left:1177px;top:541.7px;font-size:15.7px;color:#d5d8de;font-weight:700;font-style:normal;font-family:'Liberation Mono',monospace;">0.2s</div>
<div class="abs" style="left:1057px;top:573px;width:659px;height:1px;background:#35455b;border-radius:0px;"></div>
<div class="abs" style="left:1057px;top:574px;width:659px;height:207px;background:#2a2d37;border-radius:0px;"></div>
<div class="t" style="left:1078px;top:589.1px;font-size:15.3px;color:#b5bac3;font-weight:700;font-style:normal;font-family:'Liberation Sans',sans-serif;">Logs</div>
<svg class="ic" style="left:1549.5px;top:615px;width:15.5px;height:15.5px;" viewBox="0 0 24 24" fill="none" stroke="#e2e5ea" stroke-width="2.1" stroke-linecap="round" stroke-linejoin="round"><path d="m15 15 6 6"/><path d="m15 9 6-6"/><path d="M21 16v5h-5"/><path d="M21 8V3h-5"/><path d="M3 16v5h5"/><path d="m3 21 6-6"/><path d="M3 8V3h5"/><path d="M9 9 3 3"/></svg>
<div class="t" style="left:1577px;top:614.4px;font-size:16.2px;color:#e2e5ea;font-weight:400;font-style:normal;font-family:'Liberation Sans',sans-serif;">Auto scroll</div>
<svg class="ic" style="left:1665px;top:614.5px;width:15.5px;height:15.5px;" viewBox="0 0 24 24" fill="none" stroke="#ffffff" stroke-width="3.8" stroke-linecap="round" stroke-linejoin="round"><path d="M20 6 9 17l-5-5"/></svg>
<div class="t" style="left:1090px;top:671.0px;font-size:15px;color:#d5d8de;font-weight:400;font-style:normal;font-family:'Liberation Mono',monospace;">--- WAC: complete ---</div>
<div class="t" style="left:1078px;top:713.2px;font-size:15px;color:#b5bac3;font-weight:700;font-style:normal;font-family:'Liberation Sans',sans-serif;">Result</div>
<div class="t" style="left:1081px;top:749.5px;font-size:16.5px;color:#4caf6e;font-weight:400;font-style:normal;font-family:'Liberation Sans',sans-serif;">&quot;processed: &quot;</div>
<div class="abs" style="left:1671px;top:737px;width:24px;height:23px;background:#2a2d37;border:1px solid #2d3a4e;border-radius:8px;"></div>
<svg class="ic" style="left:1675px;top:740px;width:16px;height:16px;" viewBox="0 0 24 24" fill="none" stroke="#e2e5ea" stroke-width="2" stroke-linecap="round" stroke-linejoin="round"><circle cx="11" cy="11" r="8"/><path d="m21 21-4.3-4.3"/></svg>
<div class="abs" style="left:1057px;top:781px;width:659px;height:1px;background:#35455b;border-radius:0px;"></div>
<svg class="ic" style="left:1068px;top:801px;width:14px;height:14px;" viewBox="0 0 24 24" fill="none" stroke="#d5d8de" stroke-width="2" stroke-linecap="round" stroke-linejoin="round"><path d="m9 18 6-6-6-6"/></svg>
<div class="t" style="left:1089px;top:801.3px;font-size:16.7px;color:#c5c8f8;font-weight:700;font-style:normal;font-family:'Liberation Sans',sans-serif;">helper.ts</div>
<div class="abs" style="left:1174px;top:800px;width:1.5px;height:22px;background:#3452c8;border-radius:0px;"></div>
<div class="t" style="left:1185px;top:804.7px;font-size:15.7px;color:#d5d8de;font-weight:700;font-style:normal;font-family:'Liberation Mono',monospace;">0.1s</div>
<div class="abs" style="left:1057px;top:835px;width:659px;height:1px;background:#35455b;border-radius:0px;"></div>
<svg class="ic" style="left:1068px;top:856px;width:14px;height:14px;" viewBox="0 0 24 24" fill="none" stroke="#d5d8de" stroke-width="2" stroke-linecap="round" stroke-linejoin="round"><path d="m9 18 6-6-6-6"/></svg>
<div class="t" style="left:1089px;top:856.2px;font-size:17px;color:#b5bac3;font-weight:400;font-style:italic;font-family:'Liberation Sans',sans-serif;">get_urls</div>
<div class="t" style="left:1182px;top:858.7px;font-size:15.7px;color:#d5d8de;font-weight:700;font-style:normal;font-family:'Liberation Mono',monospace;">0.0s</div>
<div class="abs" style="left:1057px;top:889px;width:659px;height:1px;background:#35455b;border-radius:0px;"></div>
<svg class="ic" style="left:1093.5px;top:900.5px;width:16.5px;height:16.5px;" viewBox="0 0 24 24" fill="none" stroke="#a6abb4" stroke-width="2" stroke-linecap="round" stroke-linejoin="round"><path d="M12 3a6 6 0 0 0 9 9 9 9 0 1 1-9-9Z"/></svg>
<div class="t" style="left:1122px;top:900.8px;font-size:16.4px;color:#a6abb4;font-weight:400;font-style:italic;font-family:'Liberation Sans',sans-serif;">sleep (1s)</div>
<div class="abs" style="left:1057px;top:928px;width:659px;height:1px;background:#35455b;border-radius:0px;"></div>
<svg class="ic" style="left:1094px;top:939px;width:16px;height:16px;" viewBox="0 0 24 24" fill="none" stroke="#e6b422" stroke-width="2" stroke-linecap="round" stroke-linejoin="round"><path d="M20 13c0 5-3.5 7.5-7.66 8.95a1 1 0 0 1-.67-.01C7.5 20.5 4 18 4 13V6a1 1 0 0 1 1-1c2 0 4.5-1.2 6.24-2.72a1.17 1.17 0 0 1 1.52 0C14.51 3.81 17 5 19 5a1 1 0 0 1 1 1z"/><path d="m9 12 2 2 4-4"/></svg>
<div class="t" style="left:1122px;top:939.8px;font-size:16.7px;color:#a6abb4;font-weight:400;font-style:italic;font-family:'Liberation Sans',sans-serif;">approval</div>
<svg class="ic" style="left:1197px;top:939px;width:16px;height:16px;transform:rotate(-90deg)" viewBox="0 0 24 24" fill="none" stroke="#c5c9d0" stroke-width="2" stroke-linecap="round" stroke-linejoin="round"><path d="M21 12a9 9 0 1 1-6.219-8.56"/></svg>
<div class="t" style="left:1219px;top:939.7px;font-size:17px;color:#c5c9d0;font-weight:400;font-style:normal;font-family:'Liberation Sans',sans-serif;">waiting</div>
<div class="abs" style="left:1057px;top:966px;width:659px;height:1px;background:#35455b;border-radius:0px;"></div>
</body></html>
